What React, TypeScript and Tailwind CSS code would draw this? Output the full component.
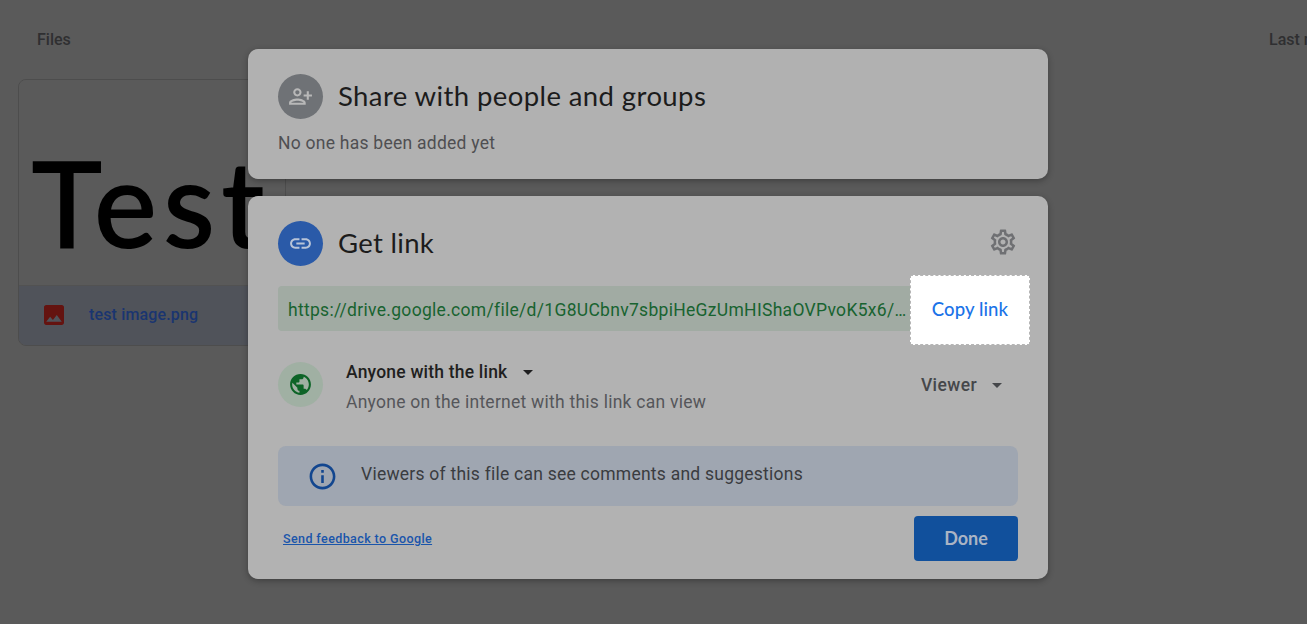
const PERSON_ADD = 'M15 12c2.21 0 4-1.79 4-4s-1.79-4-4-4-4 1.79-4 4 1.79 4 4 4zm0-6c1.1 0 2 .9 2 2s-.9 2-2 2-2-.9-2-2 .9-2 2-2zm0 8c-2.67 0-8 1.34-8 4v2h16v-2c0-2.66-5.33-4-8-4zm-6 4c.22-.72 3.31-2 6-2 2.7 0 5.8 1.29 6 2H9zm-3-3v-3h3v-2H6V7H4v3H1v2h3v3h2z'
const LINK = 'M3.9 12c0-1.71 1.39-3.1 3.1-3.1h4V7H7c-2.76 0-5 2.24-5 5s2.24 5 5 5h4v-1.9H7c-1.71 0-3.1-1.39-3.1-3.1zM8 13h8v-2H8v2zm9-6h-4v1.9h4c1.71 0 3.1 1.39 3.1 3.1s-1.39 3.1-3.1 3.1h-4V17h4c2.76 0 5-2.24 5-5s-2.24-5-5-5z'
const GLOBE = 'M12 2C6.48 2 2 6.48 2 12s4.48 10 10 10 10-4.48 10-10S17.52 2 12 2zm-1 17.93c-3.95-.49-7-3.85-7-7.93 0-.62.08-1.21.21-1.79L9 15v1c0 1.1.9 2 2 2v1.93zm6.9-2.54c-.26-.81-1-1.39-1.9-1.39h-1v-3c0-.55-.45-1-1-1H8v-2h2c.55 0 1-.45 1-1V7h2c1.1 0 2-.9 2-2v-.41c2.93 1.19 5 4.06 5 7.41 0 2.08-.8 3.97-2.1 5.39z'
const INFO = 'M11 7h2v2h-2zm0 4h2v6h-2zm1-9C6.48 2 2 6.48 2 12s4.48 10 10 10 10-4.48 10-10S17.52 2 12 2zm0 18c-4.41 0-8-3.59-8-8s3.59-8 8-8 8 3.59 8 8-3.59 8-8 8z'
const GEAR = 'M19.43 12.98c.04-.32.07-.64.07-.98 0-.34-.03-.66-.07-.98l2.11-1.65c.19-.15.24-.42.12-.64l-2-3.46c-.09-.16-.26-.25-.44-.25-.06 0-.12.01-.17.03l-2.49 1c-.52-.4-1.08-.73-1.69-.98l-.38-2.65C14.46 2.18 14.25 2 14 2h-4c-.25 0-.46.18-.49.42l-.38 2.65c-.61.25-1.17.59-1.69.98l-2.49-1c-.06-.02-.12-.03-.18-.03-.17 0-.34.09-.43.25l-2 3.46c-.13.22-.07.49.12.64l2.11 1.65c-.04.32-.07.65-.07.98 0 .33.03.66.07.98l-2.11 1.65c-.19.15-.24.42-.12.64l2 3.46c.09.16.26.25.44.25.06 0 .12-.01.17-.03l2.49-1c.52.4 1.08.73 1.69.98l.38 2.65c.03.24.24.42.49.42h4c.25 0 .46-.18.49-.42l.38-2.65c.61-.25 1.17-.59 1.69-.98l2.49 1c.06.02.12.03.18.03.17 0 .34-.09.43-.25l2-3.46c.12-.22.07-.49-.12-.64l-2.11-1.65zm-1.98-1.71c.04.31.05.52.05.73 0 .21-.02.43-.05.73l-.14 1.13.89.7 1.08.84-.7 1.21-1.27-.51-1.04-.42-.9.68c-.43.32-.84.56-1.25.73l-1.06.43-.16 1.13-.2 1.35h-1.4l-.19-1.35-.16-1.13-1.06-.43c-.43-.18-.83-.41-1.23-.71l-.91-.7-1.06.43-1.27.51-.7-1.21 1.08-.84.89-.7-.14-1.13c-.03-.31-.05-.54-.05-.74s.02-.43.05-.73l.14-1.13-.89-.7-1.08-.84.7-1.21 1.27.51 1.04.42.9-.68c.43-.32.84-.56 1.25-.73l1.06-.43.16-1.13.2-1.35h1.39l.19 1.35.16 1.13 1.06.43c.43.18.83.41 1.23.71l.91.7 1.06-.43 1.27-.51.7 1.21-1.07.85-.89.7.14 1.13zM12 8c-2.21 0-4 1.79-4 4s1.79 4 4 4 4-1.79 4-4-1.79-4-4-4zm0 6c-1.1 0-2-.9-2-2s.9-2 2-2 2 .9 2 2-.9 2-2 2z'
const IMAGE = 'M21 19V5c0-1.1-.9-2-2-2H5c-1.1 0-2 .9-2 2v14c0 1.1.9 2 2 2h14c1.1 0 2-.9 2-2zM8.5 13.5l2.5 3.01L14.5 12l4.5 6H5l3.5-4.5z'

function Icon({ d, className, box = '0 0 24 24' }: { d: string; className: string; box?: string }) {
  return (
    <svg viewBox={box} fill="currentColor" className={className}>
      <path d={d} />
    </svg>
  )
}

function Caret({ className }: { className: string }) {
  return <span className={`block w-0 h-0 border-x-[5px] border-x-transparent border-t-[5px] ${className}`} />
}

function Background() {
  return (
    <div className="h-full px-[18px]">
      <div className="flex justify-between h-[79px] pt-[30px] pl-[19px] text-[16px] font-medium leading-5 text-[#2f2f31]">
        <span>Files</span>
        <span className="w-[20px] whitespace-nowrap">Last modified</span>
      </div>
      <div className="w-[268px] h-[267px] rounded-lg border border-[#4d4d4d] overflow-hidden flex flex-col">
        <div className="h-[206px] bg-[#5a5a5a] border-b border-[#525252] pl-[13px] pt-[47px] text-[118px] leading-[150px] tracking-[7px] text-black font-['Lato',sans-serif] [-webkit-text-stroke:2px_black] overflow-hidden">
          Test
        </div>
        <div className="flex-1 bg-[#50535a] flex items-center pl-[25px] pb-[1px] gap-[25px]">
          <Icon d={IMAGE} box="3 3 18 18" className="w-5 h-5 text-[#641310]" />
          <span className="mb-[1px] text-[16px] tracking-[0.15px] font-medium text-[#1a3570]">test image.png</span>
        </div>
      </div>
    </div>
  )
}

function ShareCard() {
  return (
    <div className="h-[130px] rounded-[10px] bg-[#b1b1b1] shadow-[0_2px_6px_rgba(0,0,0,0.3)] px-[30px] pt-[25px]">
      <div className="flex items-center gap-[15px]">
        <div className="w-[45px] h-[45px] rounded-full bg-[#6f7276] flex items-center justify-center">
          <Icon d={PERSON_ADD} className="w-[25px] h-[25px] -scale-x-100 text-[#b8b8b8]" />
        </div>
        <h2 className="-mt-[2px] text-[27.5px] leading-9 tracking-[0.4px] text-[#1c1c1c] font-['Lato',sans-serif]">Share with people and groups</h2>
      </div>
      <p className="mt-[13px] text-[17.5px] leading-[22px] tracking-[0.25px] text-[#4f4f52]">No one has been added yet</p>
    </div>
  )
}

function LinkCard() {
  return (
    <div className="h-[383px] rounded-[10px] bg-[#b2b2b2] shadow-[0_2px_6px_rgba(0,0,0,0.3)] px-[30px] pt-[25px]">
      <div className="flex items-center gap-[15px]">
        <div className="w-[45px] h-[45px] rounded-full bg-[#2a5aa8] flex items-center justify-center">
          <Icon d={LINK} className="w-[25px] h-[25px] text-[#b8c4d8]" />
        </div>
        <h2 className="flex-1 -mt-[2px] text-[27.5px] leading-9 tracking-[0.3px] text-[#1c1c1c] font-['Lato',sans-serif]">Get link</h2>
        <Icon d={GEAR} className="w-[30px] h-[30px] -mt-[4px] text-[#6f7073]" />
      </div>

      <div className="mt-[9px] flex items-start -mr-[12px]">
        <div className="flex-1 min-w-0 mt-[11px] h-[45px] rounded-l bg-[#a1aba3] pl-[10px] pt-[3px] flex items-center text-[17.5px] tracking-[0.3px] whitespace-nowrap text-[#186330]">
          https://drive.google.com/file/d/1G8UCbnv7sbpiHeGzUmHIShaOVPvoK5x6/…
        </div>
        <button className="w-[120px] h-[70px] bg-white border border-dashed border-[#b5b5b5] text-[18.5px] tracking-[0.1px] font-medium text-[#1a73e8] font-['Lato',sans-serif]">
          Copy link
        </button>
      </div>

      <div className="mt-[17px] flex items-start gap-[22px]">
        <div className="w-[45px] h-[45px] rounded-full bg-[#a0b0a3] flex items-center justify-center">
          <Icon d={GLOBE} className="w-[25px] h-[25px] text-[#0d6427]" />
        </div>
        <div className="flex-1 -mt-[2px] pl-[1px]">
          <div className="flex items-center gap-[16px] text-[17.5px] leading-[24px] tracking-[0.2px] font-medium text-[#1f1f20]">
            Anyone with the link
            <Caret className="border-t-[#1f1f20]" />
          </div>
          <p className="mt-[6px] text-[17.5px] leading-[24px] tracking-[0.25px] text-[#55565a]">Anyone on the internet with this link can view</p>
        </div>
        <div className="mt-[11px] mr-[16px] flex items-center gap-[15px] text-[17.5px] leading-[24px] tracking-[0.4px] font-medium text-[#45474a]">
          Viewer
          <Caret className="border-t-[#45474a]" />
        </div>
      </div>

      <div className="mt-[32px] h-[60px] rounded-lg bg-[#9fa6b1] flex items-center pl-[30px] gap-[23px]">
        <Icon d={INFO} className="w-[31px] h-[31px] -ml-[1px] text-[#12468f]" />
        <span className="mb-[3px] text-[17.5px] tracking-[0.24px] text-[#3a3c40]">Viewers of this file can see comments and suggestions</span>
      </div>

      <div className="mt-[10px] flex items-center justify-between">
        <a className="ml-[5px] mt-[1px] text-[12.5px] font-medium tracking-[0.4px] underline text-[#1a55ab]">Send feedback to Google</a>
        <button className="w-[104px] h-[45px] rounded bg-[#11509c] text-[18px] font-bold text-[#aab4c4] font-['Lato',sans-serif]">Done</button>
      </div>
    </div>
  )
}

export default function App() {
  return (
    <div className="relative w-[1307px] h-[624px] overflow-hidden bg-[#5a5a5a] font-['Roboto',sans-serif]">
      <Background />
      <div className="absolute left-[248px] top-[49px] w-[800px] flex flex-col gap-[17px]">
        <ShareCard />
        <LinkCard />
      </div>
    </div>
  )
}
